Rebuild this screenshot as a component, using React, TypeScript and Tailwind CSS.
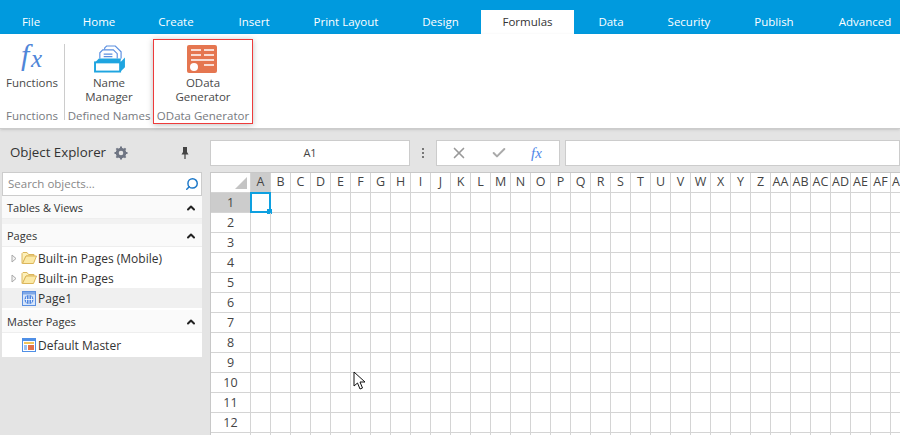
import React from "react";
import { ChevronUp, Check, X, Search } from "lucide-react";

const tabs = ["File", "Home", "Create", "Insert", "Print Layout", "Design", "Formulas", "Data", "Security", "Publish", "Advanced"];
const tabWidths = [62, 74, 80, 76, 108, 81, 93, 74, 82, 88, 94];
const columns = [..."ABCDEFGHIJKLMNOPQRSTUVWXYZ", "AA", "AB", "AC", "AD", "AE", "AF", "AG"];
const rows = [1, 2, 3, 4, 5, 6, 7, 8, 9, 10, 11, 12, 13];

function FolderIcon() {
  return (
    <svg width="16" height="14" viewBox="0 0 16 14" className="shrink-0">
      <path d="M1 12.5V2.5L2 1.5H6L7.5 3.5H13V5H5L1.5 12.5" fill="#fdf0b8" stroke="#dcb65c" />
      <path d="M1.5 12.5L5 5H15.5L12.5 12.5Z" fill="#fbe9a6" stroke="#dcb65c" />
    </svg>
  );
}

function Caret() {
  return (
    <svg width="6" height="9" viewBox="0 0 6 9" className="shrink-0">
      <path d="M1 1L5 4.5L1 8Z" fill="#f4f4f4" stroke="#a9a9a9" />
    </svg>
  );
}

function PageIcon() {
  return (
    <svg width="14" height="15" viewBox="0 0 14 15" className="shrink-0">
      <rect x="0.5" y="0.5" width="13" height="14" fill="#d8e6fa" stroke="#5b8fe0" />
      <rect x="1" y="1" width="12" height="2.5" fill="#7fa7e6" />
      <circle cx="7" cy="8.5" r="4.5" fill="#4f86e0" />
      <path d="M2.5 8.5H11.5M7 4V13M4.5 5.5V11.5M9.5 5.5V11.5" stroke="#ffffff" strokeWidth="0.8" />
    </svg>
  );
}

function MasterIcon() {
  return (
    <svg width="14" height="14" viewBox="0 0 14 14" className="shrink-0">
      <rect x="0.5" y="0.5" width="13" height="13" fill="#ffffff" stroke="#4f8fe6" />
      <rect x="1" y="1" width="12" height="2" fill="#4f8fe6" />
      <rect x="2" y="4" width="10" height="2" fill="#f2c65c" />
      <rect x="2" y="7" width="3" height="5" fill="#9cc0f0" />
      <rect x="6" y="7" width="6" height="5" fill="#e2714a" />
    </svg>
  );
}

function FxLarge() {
  return (
    <svg width="27" height="28" viewBox="0 0 27 28" className="overflow-visible">
      <text x="3" y="20" fontFamily="'Liberation Serif', serif" fontStyle="italic" fontSize="30" fill="#4f86d8">f</text>
      <text x="13" y="22" fontFamily="'Liberation Serif', serif" fontStyle="italic" fontSize="25" fill="#4f86d8">x</text>
    </svg>
  );
}

function NameManagerIcon() {
  return (
    <svg width="31" height="28" viewBox="0 0 32 29" className="ml-[2px]">
      <path d="M11 5V3L13 1H22L28 7V14" fill="#ffffff" stroke="#5b8fe0" strokeWidth="1.2" />
      <path d="M6 14V8L9 5H20L24 9V14" fill="#ffffff" stroke="#5b8fe0" strokeWidth="1.2" />
      <path d="M10 9.5H19M10 12H19" stroke="#5b8fe0" strokeWidth="1.2" />
      <path d="M27 28L32 23V13L27 18Z" fill="#1fa5e0" />
      <path d="M1 18L5 14H28L27 18Z" fill="#1fa5e0" />
      <rect x="1" y="18" width="26" height="9.5" fill="#ffffff" stroke="#1fa5e0" strokeWidth="2" />
    </svg>
  );
}

function ODataIcon() {
  return (
    <svg width="30" height="28" viewBox="0 0 30 28" className="mr-[2px]">
      <rect width="30" height="28" rx="2" fill="#e57650" />
      <path d="M4 5H14M17 5H27M4 10H14M17 10H27M4 15H27M17 20H27" stroke="#ffffff" strokeWidth="1.6" />
      <circle cx="7" cy="22" r="4" fill="#ffffff" />
    </svg>
  );
}

function RibbonButton({ icon, label, iconHeight }: { icon: React.ReactNode; label: React.ReactNode; iconHeight: string }) {
  return (
    <div className="flex flex-col items-center">
      <div className={`${iconHeight} flex items-end justify-center pb-[3px]`}>{icon}</div>
      <div className="text-center text-[11.5px] leading-[14px] text-[#4a4a4a]">{label}</div>
    </div>
  );
}

function SectionHeader({ title }: { title: string }) {
  return (
    <div className="h-[23px] flex items-center justify-between pl-[5px] pr-[5px] pt-[2px] bg-[#fafafa] border-b border-[#eeeeee] text-[11px] text-[#333333]">
      <span>{title}</span>
      <ChevronUp size={12} strokeWidth={4} className="text-[#222222]" />
    </div>
  );
}

function TreeRow({ icon, label, caret, active }: { icon: React.ReactNode; label: string; caret?: boolean; active?: boolean }) {
  return (
    <div className={`h-5 flex items-center text-[12px] text-[#333333] ${active ? "bg-[#f0f0f0]" : ""}`}>
      <div className="w-[19px] pl-[9px] shrink-0">{caret && <Caret />}</div>
      <div className="w-4 flex justify-center shrink-0">{icon}</div>
      <span className="ml-px pt-px whitespace-nowrap">{label}</span>
    </div>
  );
}

function Sheet() {
  return (
    <div className="flex-1 overflow-hidden border-l border-t border-[#c8c8c8] bg-white text-[12.5px] text-[#444444]">
      <div className="flex h-5 border-b border-[#d4d4d4]">
        <div className="w-10 shrink-0 flex items-end justify-end border-r border-[#d4d4d4] pr-[3px] pb-[3px]">
          <div className="w-0 h-0 border-l-[12px] border-b-[12px] border-l-transparent border-b-[#c4c4c4]" />
        </div>
        {columns.map((c, i) => (
          <div
            key={c}
            className={`w-5 shrink-0 flex items-center justify-center border-r border-[#d4d4d4] whitespace-nowrap overflow-hidden ${i === 0 ? "bg-[#cccccc]" : ""}`}
          >
            {c}
          </div>
        ))}
      </div>
      {rows.map((r) => (
        <div key={r} className="flex h-5 border-b border-[#d4d4d4]">
          <div className={`w-10 shrink-0 flex items-center justify-center pt-px border-r border-[#d4d4d4] ${r === 1 ? "bg-[#cccccc]" : ""}`}>
            {r < 13 ? r : ""}
          </div>
          {columns.map((c) => (
            <div key={c} className="relative w-5 shrink-0 border-r border-[#d4d4d4]">
              {r === 1 && c === "A" && (
                <div className="absolute -left-px -top-px w-[21px] h-[21px] border-2 border-[#0ea0e0]">
                  <div className="absolute -right-[3px] -bottom-[3px] w-[5px] h-[5px] bg-[#0ea0e0]" />
                </div>
              )}
            </div>
          ))}
        </div>
      ))}
    </div>
  );
}

export default function App() {
  return (
    <div className="relative w-[900px] h-[435px] overflow-hidden flex flex-col bg-[#e4e4e4] font-['Open_Sans',sans-serif]">
      <div className="h-[34px] shrink-0 flex items-end bg-[#009ade] pt-[10px]">
        {tabs.map((t, i) => (
          <div
            key={t}
            style={{ width: tabWidths[i] }}
            className={`h-6 shrink-0 flex items-center justify-center text-[11.5px] whitespace-nowrap ${t === "Formulas" ? "bg-white text-[#333333]" : "text-white"}`}
          >
            {t}
          </div>
        ))}
      </div>

      <div className="h-[95px] shrink-0 flex bg-white border-b border-[#cccccc] pt-[5px] shadow-sm">
        <div className="w-[64px] h-[85px] py-px flex flex-col items-center shrink-0 justify-between">
          <RibbonButton iconHeight="h-[36px]" icon={<FxLarge />} label="Functions" />
          <div className="text-[11.5px] text-[#777a80] leading-[14px]">Functions</div>
        </div>
        <div className="w-px h-[76px] mt-[5px] bg-[#cccccc] shrink-0" />
        <div className="w-[88px] h-[85px] py-px flex flex-col items-center shrink-0 justify-between">
          <RibbonButton iconHeight="h-[36px]" icon={<NameManagerIcon />} label={<>Name<br />Manager</>} />
          <div className="text-[11.5px] text-[#777a80] leading-[14px] whitespace-nowrap">Defined Names</div>
        </div>
        <div className="w-[100px] h-[85px] flex flex-col items-center shrink-0 justify-between border border-[#ee3b3b] shadow-[0_1px_6px_rgba(0,0,0,0.25)]">
          <RibbonButton iconHeight="h-[36px]" icon={<ODataIcon />} label={<>OData<br />Generator</>} />
          <div className="text-[11.5px] text-[#777a80] leading-[14px] whitespace-nowrap">OData Generator</div>
        </div>
      </div>

      <div className="flex-1 flex min-h-0">
        <div className="w-[210px] shrink-0 pl-[2px] pr-2">
          <div className="h-[43px] flex items-center justify-between pl-2 pr-[13px] pt-1">
            <div className="flex items-center gap-[8px] text-[13.3px] text-[#333333]">
              Object Explorer
              <svg width="14" height="14" viewBox="0 0 14 14">
                <circle cx="7" cy="7" r="3.8" fill="none" stroke="#6f7583" strokeWidth="3" />
                <path d="M7 0.5V3M7 11V13.5M0.5 7H3M11 7H13.5M2.4 2.4L4 4M10 10L11.6 11.6M11.6 2.4L10 4M2.4 11.6L4 10" stroke="#6f7583" strokeWidth="2" />
              </svg>
            </div>
            <svg width="8" height="14" viewBox="0 0 8 14">
              <path d="M2 1H6V6L7.5 8.5H0.5L2 6Z" fill="#444444" />
              <path d="M4 8V13" stroke="#444444" strokeWidth="1.2" />
            </svg>
          </div>
          <div className="h-6 flex items-center justify-between bg-white border border-[#cccccc] pl-[5px] pr-[2px] text-[11.5px] text-[#888888]">
            <span>Search objects...</span>
            <Search size={14} strokeWidth={2.5} className="text-[#1c78c8] -scale-x-100" />
          </div>
          <div className="bg-white">
            <SectionHeader title="Tables & Views" />
            <div className="h-[5px] bg-[#f2f2f2]" />
            <SectionHeader title="Pages" />
            <div className="pt-px">
              <TreeRow caret icon={<FolderIcon />} label="Built-in Pages (Mobile)" />
              <TreeRow caret icon={<FolderIcon />} label="Built-in Pages" />
              <TreeRow active icon={<PageIcon />} label="Page1" />
            </div>
            <div className="h-[2px]" />
            <SectionHeader title="Master Pages" />
            <div className="pb-[2px] pt-[2px]">
              <TreeRow icon={<MasterIcon />} label="Default Master" />
            </div>
          </div>
        </div>

        <div className="flex-1 min-w-0 flex flex-col">
          <div className="h-[43px] shrink-0 flex items-start pt-[11px]">
            <div className="w-[200px] h-[26px] flex items-center justify-center bg-white border border-[#cccccc] text-[11px] text-[#444444]">A1</div>
            <div className="w-[26px] h-[26px] flex flex-col items-center justify-center gap-[2px]">
              <div className="w-[2px] h-[2px] bg-[#777777]" />
              <div className="w-[2px] h-[2px] bg-[#777777]" />
              <div className="w-[2px] h-[2px] bg-[#777777]" />
            </div>
            <div className="w-[124px] h-[26px] flex items-center bg-white border border-[#cccccc]">
              <X size={18} strokeWidth={2.2} className="ml-[13px] text-[#999999]" />
              <Check size={16} strokeWidth={3} className="ml-[23px] text-[#aaaaaa]" />
              <span className="ml-[24px] italic text-[15px] text-[#4f86e8] font-['Liberation_Serif',serif]">fx</span>
            </div>
            <div className="flex-1 h-[26px] ml-[5px] bg-white border border-[#cccccc]" />
          </div>
          <Sheet />
        </div>
      </div>

      <svg width="13" height="20" viewBox="0 0 13 20" className="absolute left-[353px] top-[371px]">
        <path d="M1 1V15L4.5 12L7 18L9.5 17L7 11H12Z" fill="#ffffff" stroke="#111111" strokeWidth="1" />
      </svg>
    </div>
  );
}
